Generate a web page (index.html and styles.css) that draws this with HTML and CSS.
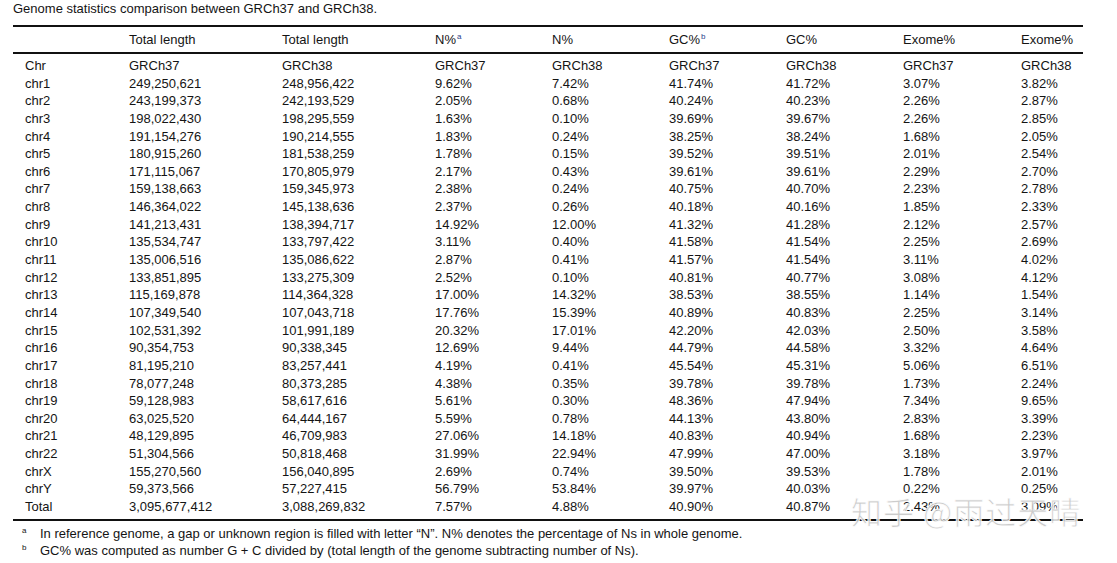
FILE: index.html
```html
<!DOCTYPE html>
<html>
<head>
<meta charset="utf-8">
<link rel="stylesheet" href="styles.css">
</head>
<body>
<div class="page">
  <div class="caption">Genome statistics comparison between GRCh37 and GRCh38.</div>
  <table class="stats">
    <colgroup>
      <col class="c0"><col class="c1"><col class="c2"><col class="c3"><col class="c4"><col class="c5"><col class="c6"><col class="c7"><col class="c8">
    </colgroup>
    <thead>
      <tr>
        <th></th><th>Total length</th><th>Total length</th><th>N%<sup>a</sup></th><th>N%</th><th>GC%<sup>b</sup></th><th>GC%</th><th>Exome%</th><th>Exome%</th>
      </tr>
    </thead>
    <tbody>
      <tr class="first"><td>Chr</td><td>GRCh37</td><td>GRCh38</td><td>GRCh37</td><td>GRCh38</td><td>GRCh37</td><td>GRCh38</td><td>GRCh37</td><td>GRCh38</td></tr>
      <tr><td>chr1</td><td>249,250,621</td><td>248,956,422</td><td>9.62%</td><td>7.42%</td><td>41.74%</td><td>41.72%</td><td>3.07%</td><td>3.82%</td></tr>
      <tr><td>chr2</td><td>243,199,373</td><td>242,193,529</td><td>2.05%</td><td>0.68%</td><td>40.24%</td><td>40.23%</td><td>2.26%</td><td>2.87%</td></tr>
      <tr><td>chr3</td><td>198,022,430</td><td>198,295,559</td><td>1.63%</td><td>0.10%</td><td>39.69%</td><td>39.67%</td><td>2.26%</td><td>2.85%</td></tr>
      <tr><td>chr4</td><td>191,154,276</td><td>190,214,555</td><td>1.83%</td><td>0.24%</td><td>38.25%</td><td>38.24%</td><td>1.68%</td><td>2.05%</td></tr>
      <tr><td>chr5</td><td>180,915,260</td><td>181,538,259</td><td>1.78%</td><td>0.15%</td><td>39.52%</td><td>39.51%</td><td>2.01%</td><td>2.54%</td></tr>
      <tr><td>chr6</td><td>171,115,067</td><td>170,805,979</td><td>2.17%</td><td>0.43%</td><td>39.61%</td><td>39.61%</td><td>2.29%</td><td>2.70%</td></tr>
      <tr><td>chr7</td><td>159,138,663</td><td>159,345,973</td><td>2.38%</td><td>0.24%</td><td>40.75%</td><td>40.70%</td><td>2.23%</td><td>2.78%</td></tr>
      <tr><td>chr8</td><td>146,364,022</td><td>145,138,636</td><td>2.37%</td><td>0.26%</td><td>40.18%</td><td>40.16%</td><td>1.85%</td><td>2.33%</td></tr>
      <tr><td>chr9</td><td>141,213,431</td><td>138,394,717</td><td>14.92%</td><td>12.00%</td><td>41.32%</td><td>41.28%</td><td>2.12%</td><td>2.57%</td></tr>
      <tr><td>chr10</td><td>135,534,747</td><td>133,797,422</td><td>3.11%</td><td>0.40%</td><td>41.58%</td><td>41.54%</td><td>2.25%</td><td>2.69%</td></tr>
      <tr><td>chr11</td><td>135,006,516</td><td>135,086,622</td><td>2.87%</td><td>0.41%</td><td>41.57%</td><td>41.54%</td><td>3.11%</td><td>4.02%</td></tr>
      <tr><td>chr12</td><td>133,851,895</td><td>133,275,309</td><td>2.52%</td><td>0.10%</td><td>40.81%</td><td>40.77%</td><td>3.08%</td><td>4.12%</td></tr>
      <tr><td>chr13</td><td>115,169,878</td><td>114,364,328</td><td>17.00%</td><td>14.32%</td><td>38.53%</td><td>38.55%</td><td>1.14%</td><td>1.54%</td></tr>
      <tr><td>chr14</td><td>107,349,540</td><td>107,043,718</td><td>17.76%</td><td>15.39%</td><td>40.89%</td><td>40.83%</td><td>2.25%</td><td>3.14%</td></tr>
      <tr><td>chr15</td><td>102,531,392</td><td>101,991,189</td><td>20.32%</td><td>17.01%</td><td>42.20%</td><td>42.03%</td><td>2.50%</td><td>3.58%</td></tr>
      <tr><td>chr16</td><td>90,354,753</td><td>90,338,345</td><td>12.69%</td><td>9.44%</td><td>44.79%</td><td>44.58%</td><td>3.32%</td><td>4.64%</td></tr>
      <tr><td>chr17</td><td>81,195,210</td><td>83,257,441</td><td>4.19%</td><td>0.41%</td><td>45.54%</td><td>45.31%</td><td>5.06%</td><td>6.51%</td></tr>
      <tr><td>chr18</td><td>78,077,248</td><td>80,373,285</td><td>4.38%</td><td>0.35%</td><td>39.78%</td><td>39.78%</td><td>1.73%</td><td>2.24%</td></tr>
      <tr><td>chr19</td><td>59,128,983</td><td>58,617,616</td><td>5.61%</td><td>0.30%</td><td>48.36%</td><td>47.94%</td><td>7.34%</td><td>9.65%</td></tr>
      <tr><td>chr20</td><td>63,025,520</td><td>64,444,167</td><td>5.59%</td><td>0.78%</td><td>44.13%</td><td>43.80%</td><td>2.83%</td><td>3.39%</td></tr>
      <tr><td>chr21</td><td>48,129,895</td><td>46,709,983</td><td>27.06%</td><td>14.18%</td><td>40.83%</td><td>40.94%</td><td>1.68%</td><td>2.23%</td></tr>
      <tr><td>chr22</td><td>51,304,566</td><td>50,818,468</td><td>31.99%</td><td>22.94%</td><td>47.99%</td><td>47.00%</td><td>3.18%</td><td>3.97%</td></tr>
      <tr><td>chrX</td><td>155,270,560</td><td>156,040,895</td><td>2.69%</td><td>0.74%</td><td>39.50%</td><td>39.53%</td><td>1.78%</td><td>2.01%</td></tr>
      <tr><td>chrY</td><td>59,373,566</td><td>57,227,415</td><td>56.79%</td><td>53.84%</td><td>39.97%</td><td>40.03%</td><td>0.22%</td><td>0.25%</td></tr>
      <tr class="last"><td>Total</td><td>3,095,677,412</td><td>3,088,269,832</td><td>7.57%</td><td>4.88%</td><td>40.90%</td><td>40.87%</td><td>2.43%</td><td>3.09%</td></tr>
    </tbody>
  </table>
  <div class="notes">
    <div class="note"><span class="mark">a</span><span>In reference genome, a gap or unknown region is filled with letter “N”. N% denotes the percentage of Ns in whole genome.</span></div>
    <div class="note"><span class="mark">b</span><span>GC% was computed as number G + C divided by (total length of the genome subtracting number of Ns).</span></div>
  </div>
  <div class="watermark">知乎 @雨过天晴</div>
</div>
</body>
</html>
```
FILE: styles.css
```css
html, body {
  margin: 0;
  padding: 0;
  background: #ffffff;
}
body {
  font-family: "Liberation Sans", Arial, sans-serif;
  font-size: 13px;
  color: #141414;
}
.page {
  position: relative;
  width: 1117px;
  height: 563px;
  padding: 1px 0 0 13px;
  box-sizing: border-box;
}
.caption {
  line-height: 16px;
  height: 24px;
}
.stats {
  width: 1070px;
  border-collapse: separate;
  border-spacing: 0;
  table-layout: fixed;
  border-top: 2px solid #111;
  border-bottom: 2px solid #111;
}
.c0 { width: 116px; }
.c1 { width: 153px; }
.c2 { width: 153px; }
.c3 { width: 117px; }
.c4 { width: 117px; }
.c5 { width: 117px; }
.c6 { width: 117px; }
.c7 { width: 118px; }
.c8 { width: 62px; }
.stats th {
  font-weight: normal;
  text-align: left;
  padding: 0;
  line-height: 25px;
  border-bottom: 2px solid #111;
  white-space: nowrap;
}
.stats td {
  padding: 0;
  line-height: 17.64px;
  white-space: nowrap;
}
.stats th:first-child,
.stats td:first-child {
  padding-left: 12px;
}
.stats tr.first td {
  padding-top: 3px;
}
.stats tr.last td {
  padding-bottom: 3px;
}
sup {
  font-size: 8px;
  line-height: 0;
  vertical-align: 5px;
  color: #2b3f8a;
  margin-left: 1px;
}
.notes {
  padding-top: 4px;
}
.note {
  display: flex;
  line-height: 17px;
}
.mark {
  width: 27px;
  padding-left: 9px;
  box-sizing: border-box;
  font-size: 8px;
  line-height: 12px;
}
.watermark {
  position: absolute;
  left: 851px;
  top: 494px;
  font-family: "Noto Sans CJK SC", sans-serif;
  font-size: 31px;
  line-height: 34px;
  color: rgba(195, 195, 195, 0.85);
  -webkit-text-stroke: 1px rgba(255, 255, 255, 0.9);
  letter-spacing: 1px;
  white-space: nowrap;
}
```
